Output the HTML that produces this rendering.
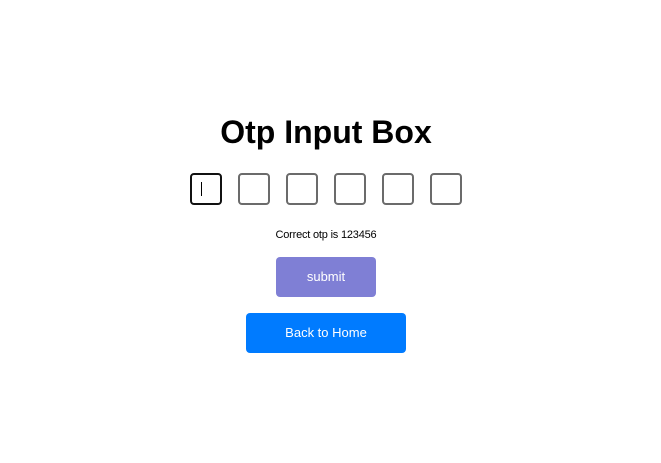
<html><head><style>
body{margin:0;background:#fff;font-family:"Liberation Sans",sans-serif;}
h1{position:absolute;left:0;width:652px;top:114px;margin:0;text-align:center;font-size:32px;font-weight:bold;color:#000;}
.b{position:absolute;top:173px;width:28px;height:28px;border:2px solid #6b6b6b;border-radius:4px;box-sizing:content-box;}
.c{position:absolute;left:0;width:652px;top:229px;text-align:center;font-size:11px;color:#000;letter-spacing:-0.2px;}
.btn{position:absolute;color:#fff;font-size:13px;text-align:center;border-radius:4px;}
</style></head><body>
<h1>Otp Input Box</h1>
<div class="b" style="left:190px;border-color:#111"><div style="position:absolute;left:9px;top:7px;width:1px;height:14px;background:#000"></div></div>
<div class="b" style="left:238px"></div>
<div class="b" style="left:286px"></div>
<div class="b" style="left:334px"></div>
<div class="b" style="left:382px"></div>
<div class="b" style="left:430px"></div>
<div class="c">Correct otp is 123456</div>
<div class="btn" style="left:276px;top:257px;width:100px;height:40px;line-height:40px;background:#7f7fd5">submit</div>
<div class="btn" style="left:246px;top:313px;width:160px;height:40px;line-height:40px;background:#007bff">Back to Home</div>
</body></html>
